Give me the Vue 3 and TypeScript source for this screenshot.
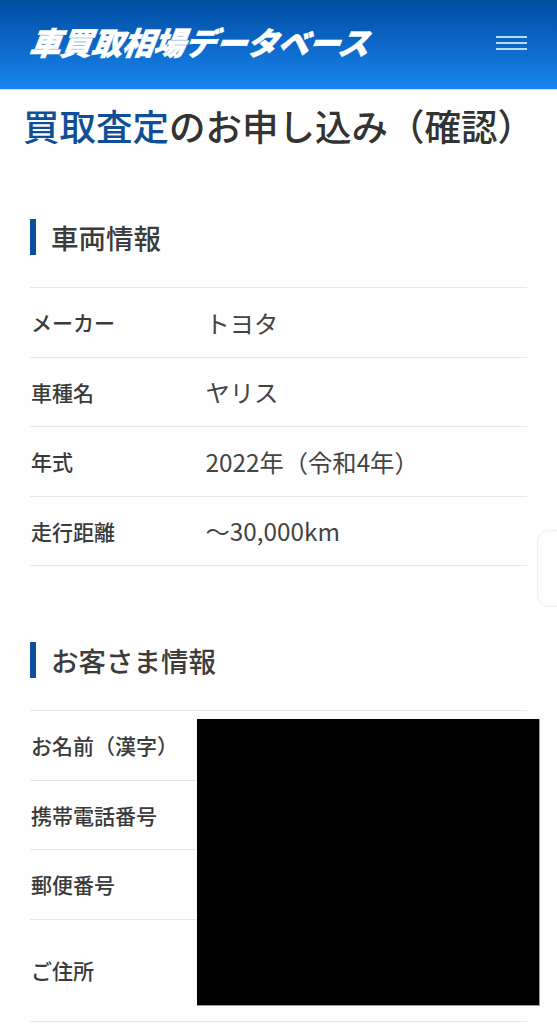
<script setup lang="ts">
interface Row { label: string; value?: string; tall?: boolean }
const vehicle: Row[] = [
  { label: 'メーカー', value: 'トヨタ' },
  { label: '車種名', value: 'ヤリス' },
  { label: '年式', value: '2022年（令和4年）' },
  { label: '走行距離', value: '〜30,000km' },
]
const customer: Row[] = [
  { label: 'お名前（漢字）' },
  { label: '携帯電話番号' },
  { label: '郵便番号' },
  { label: 'ご住所', tall: true },
]
</script>

<template>
  <div class="page">
    <header class="topbar">
      <div class="logo">車買取相場データベース</div>
      <button class="menu" aria-label="menu"><span></span><span></span><span></span></button>
    </header>
    <h1 class="title"><em>買取査定</em>のお申し込み（確認）</h1>

    <section class="vehicle">
      <h2 class="heading">車両情報</h2>
      <dl class="table">
        <div v-for="r in vehicle" :key="r.label" class="row">
          <dt>{{ r.label }}</dt>
          <dd>{{ r.value }}</dd>
        </div>
      </dl>
    </section>

    <section class="customer">
      <h2 class="heading">お客さま情報</h2>
      <dl class="table">
        <div v-for="r in customer" :key="r.label" class="row" :class="{ tall: r.tall }">
          <dt>{{ r.label }}</dt>
          <dd></dd>
        </div>
      </dl>
      <div class="redaction"></div>
    </section>

    <div class="side-tab"></div>
  </div>
</template>

<style>
html, body { margin: 0; background: #fff; }
</style>

<style scoped>
.page {
  position: relative;
  width: 557px;
  height: 1024px;
  overflow: hidden;
  background: #fefefe;
  color: #333;
  font-family: "Noto Sans CJK JP", "Noto Sans", sans-serif;
}
.topbar {
  height: 90px;
  box-sizing: border-box;
  border-bottom: 1px solid #bfe3fb;
  background: linear-gradient(180deg, #004ea0 0%, #0a62c0 40%, #1786ee 100%);
  display: flex;
  align-items: center;
  justify-content: space-between;
  padding: 0 30px 5px 30px;
}
.logo {
  color: #fff;
  font-size: 31.5px;
  line-height: 1;
  font-weight: 900;
  font-style: italic;
  letter-spacing: -0.5px;
  -webkit-text-stroke: 0.5px #fff;
  white-space: nowrap;
  transform-origin: left center;
  transform: skewX(-8deg);
}
.menu {
  width: 31px;
  padding: 0;
  border: 0;
  background: none;
  display: flex;
  flex-direction: column;
  gap: 4px;
  margin-top: 1px;
}
.menu span { display: block; height: 2px; background: #b9dcf8; }
.title {
  margin: 0;
  padding: 13px 0 0 23px;
  font-size: 36.5px;
  line-height: 46px;
  font-weight: 500;
  white-space: nowrap;
  color: #333;
}
.title em { font-style: normal; color: #0f4f97; }
.vehicle { margin: 70px 30px 0; }
.customer { margin: 76px 30px 0; position: relative; }
.heading {
  margin: 0;
  height: 36px;
  border-left: 6px solid #0d4f9c;
  padding-left: 15px;
  font-size: 27.5px;
  line-height: 36px;
  font-weight: 500;
  color: #3c3c3c;
}
.table {
  margin: 32px 0 0;
  width: 497px;
  border-top: 1px solid #e6e6e6;
}
.row {
  display: flex;
  align-items: center;
  height: 69.5px;
  box-sizing: border-box;
  border-bottom: 1px solid #e6e6e6;
}
.row.tall { height: 102px; }
.row dt {
  width: 176px;
  flex: none;
  padding-left: 1px;
  box-sizing: border-box;
  font-size: 21px;
  font-weight: 500;
  color: #3a3a3a;
  white-space: nowrap;
}
.row dd {
  margin: 0;
  margin-left: -0.5px;
  font-size: 24.3px;
  color: #444;
  white-space: nowrap;
}
.redaction {
  position: absolute;
  left: 167px;
  top: 77px;
  width: 343px;
  height: 287px;
  background: #000;
  border-right: 1px solid #999;
  border-bottom: 1px solid #999;
  box-sizing: border-box;
}
.side-tab {
  position: absolute;
  left: 537px;
  top: 530px;
  width: 30px;
  height: 77px;
  box-sizing: border-box;
  border: 1px solid #f0f0f0;
  border-radius: 12px;
}
</style>
